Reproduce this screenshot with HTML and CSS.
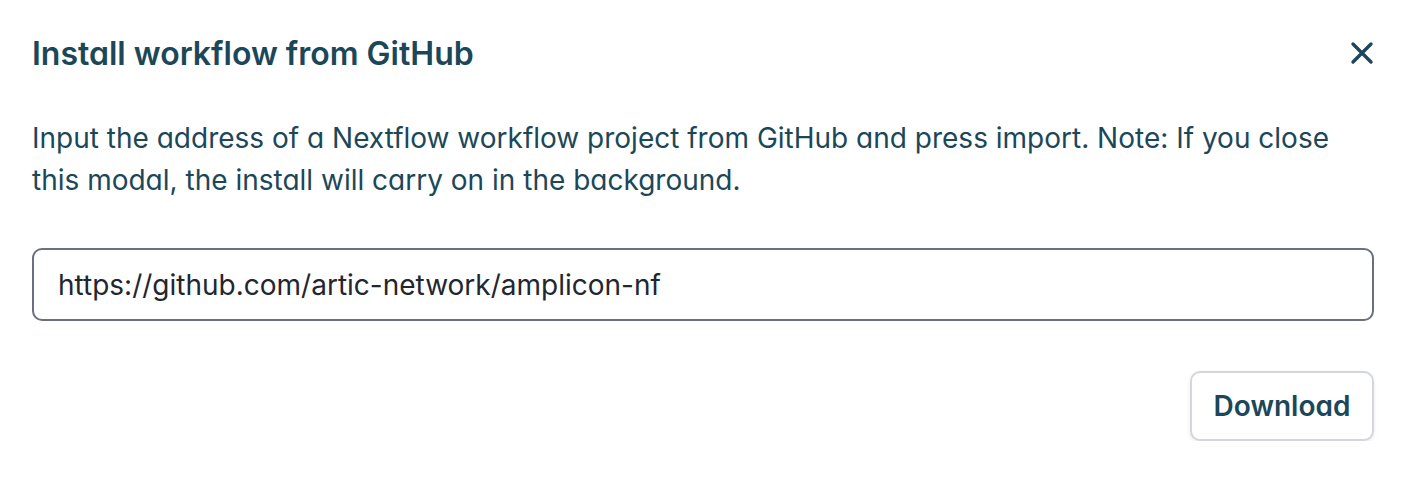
FILE: index.html
```html
<!DOCTYPE html>
<html>
<head>
<meta charset="utf-8">
<link rel="stylesheet" href="styles.css">
</head>
<body>
<div class="modal">
  <div class="header">
    <h2 class="title">Install workflow from GitHub</h2>
    <button class="close" aria-label="Close">
      <svg width="24" height="24" viewBox="0 0 24 24"><path d="M3 3 L21 21 M21 3 L3 21" stroke="#1c4759" stroke-width="3.4" stroke-linecap="round"/></svg>
    </button>
  </div>
  <p class="desc">Input the address of a Nextflow workflow project from GitHub and press import. Note: If you close this modal, the install will carry on in the background.</p>
  <input class="url" type="text" value="https://github.com/artic-network/amplicon-nf">
  <div class="footer">
    <button class="download">Download</button>
  </div>
</div>
</body>
</html>
```
FILE: styles.css
```css
html, body { margin: 0; padding: 0; background: #fff; }
body { font-family: Inter, "Noto Sans", sans-serif; font-feature-settings: "cv11"; color: #1c4759; }
.modal { padding: 31px 47px 0 32px; display: flex; flex-direction: column; }
.header { display: flex; align-items: center; justify-content: space-between; height: 44px; }
.title { margin: 0; font-size: 32px; font-weight: 600; letter-spacing: 0; }
.close { background: none; border: none; padding: 0; width: 24px; height: 24px; margin-right: 0; cursor: pointer; display: flex; }
.desc { margin: 42px 0 0 0; font-size: 28px; line-height: 42px; font-weight: 400; }
.url { margin-top: 47px; height: 73px; box-sizing: border-box; border: 2px solid #6b6f82; border-radius: 10px; padding: 0 24px; font-family: Inter, sans-serif; font-size: 28px; color: #22262e; outline: none; }
.footer { display: flex; justify-content: flex-end; margin-top: 50px; }
.download { width: 184px; height: 70px; border: 2px solid #d3d7dc; border-radius: 10px; background: #fff; font-family: Inter, sans-serif; font-feature-settings: "cv11"; font-size: 28px; font-weight: 600; color: #1c4759; box-shadow: 0 2px 4px rgba(0,0,0,0.08); cursor: pointer; }
```
